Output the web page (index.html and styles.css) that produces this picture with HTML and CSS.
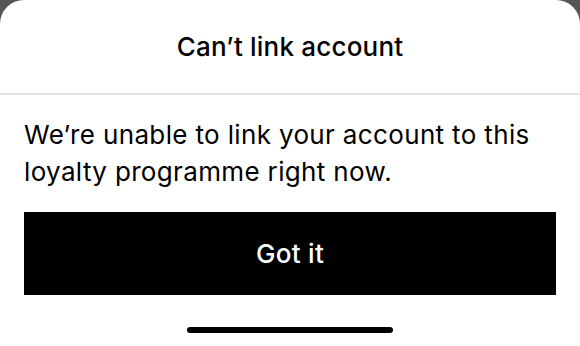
FILE: index.html
```html
<!DOCTYPE html>
<html lang="en">
<head>
<meta charset="utf-8">
<link rel="stylesheet" href="styles.css">
</head>
<body>
<div class="sheet">
  <header class="sheet-header">
    <h1 class="title">Can’t link account</h1>
  </header>
  <div class="divider"></div>
  <div class="sheet-body">
    <p class="message">We’re unable to link your account to this loyalty programme right now.</p>
    <button class="primary-btn">Got it</button>
  </div>
  <div class="home-indicator-wrap">
    <div class="home-indicator"></div>
  </div>
</div>
</body>
</html>
```
FILE: styles.css
```css
html, body {
  margin: 0;
  padding: 0;
  width: 580px;
  height: 346px;
  background: #555555;
  overflow: hidden;
}
body {
  font-family: Inter, "Noto Sans", sans-serif;
  color: #000000;
}
.sheet {
  width: 580px;
  height: 346px;
  background: #ffffff;
  border-radius: 24px 24px 0 0;
  display: flex;
  flex-direction: column;
}
.sheet-header {
  height: 93px;
  display: flex;
  align-items: center;
  justify-content: center;
}
.title {
  margin: 0;
  font-size: 26px;
  font-weight: 500;
  letter-spacing: 0.2px;
}
.divider {
  height: 2px;
  background: #e3e3e3;
}
.sheet-body {
  padding: 21px 24px 0;
  display: flex;
  flex-direction: column;
}
.message {
  margin: 0;
  font-size: 26px;
  line-height: 37px;
  font-weight: 400;
  letter-spacing: 0.35px;
}
.primary-btn {
  margin-top: 22px;
  height: 83px;
  border: none;
  border-radius: 0;
  background: #000000;
  color: #ffffff;
  font-family: inherit;
  font-size: 26px;
  font-weight: 500;
  letter-spacing: 0.3px;
  cursor: pointer;
}
.home-indicator-wrap {
  display: flex;
  justify-content: center;
  padding-top: 32px;
}
.home-indicator {
  width: 206px;
  height: 6px;
  border-radius: 3px;
  background: #000000;
}
```
